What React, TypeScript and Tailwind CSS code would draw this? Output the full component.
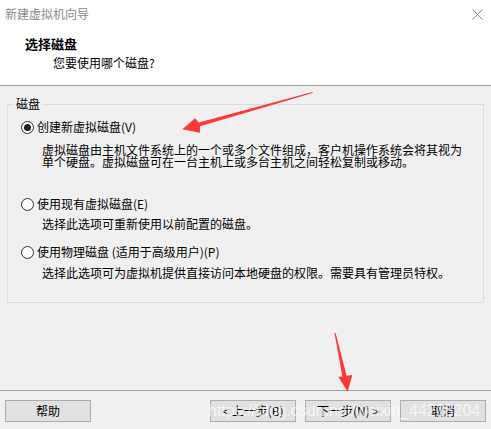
import React, { useState } from 'react';

const font = { fontFamily: '"Noto Sans CJK SC", "Microsoft YaHei", sans-serif' };

function Radio({ checked }: { checked: boolean }) {
  return (
    <span className="w-[13px] h-[13px] rounded-full border border-[#333] bg-white flex items-center justify-center shrink-0">
      {checked && <span className="w-[7px] h-[7px] rounded-full bg-[#222]" />}
    </span>
  );
}

function Option({
  label,
  desc,
  checked,
  onPick,
  rowClass,
  descClass,
}: {
  label: string;
  desc: string[];
  checked: boolean;
  onPick: () => void;
  rowClass: string;
  descClass: string;
}) {
  return (
    <div>
      <button
        type="button"
        onClick={onPick}
        className={`flex items-center gap-[3px] ml-[13px] h-[16px] bg-transparent border-none p-0 cursor-default text-[12px] text-black ${rowClass}`}
      >
        <Radio checked={checked} />
        <span className="leading-[16px]">{label}</span>
      </button>
      <div className={`ml-[34px] text-[12px] leading-[12px] text-black ${descClass}`}>
        {desc.map((d) => (
          <div key={d}>{d}</div>
        ))}
      </div>
    </div>
  );
}

function WizButton({ children }: { children: React.ReactNode }) {
  return (
    <button
      type="button"
      className="w-[86px] h-[22px] bg-[#e1e1e1] border border-[#adadad] text-[12px] text-black leading-none flex items-center justify-center"
    >
      {children}
    </button>
  );
}

export default function App() {
  const [pick, setPick] = useState<number>(0);

  return (
    <div className="w-[491px] h-[429px] relative overflow-hidden bg-[#f0f0f0] flex flex-col select-none" style={font}>
      {/* Title + header */}
      <div className="h-[86px] bg-white border-b border-[#a0a0a0] shrink-0">
        <div className="h-[28px] flex items-center justify-between pl-[5px] pr-[8px]">
          <span className="text-[12px] text-[#8a8a8a]">新建虚拟机向导</span>
          <svg width="11" height="11" viewBox="0 0 11 11">
            <path d="M0.5 0.5 L10.5 10.5 M10.5 0.5 L0.5 10.5" stroke="#8a8a8a" strokeWidth="1" />
          </svg>
        </div>
        <div className="pl-[25px] mt-[9px] text-[13px] font-bold leading-[14px] text-black">选择磁盘</div>
        <div className="pl-[53px] mt-[5px] text-[12px] leading-[14px] text-black">您要使用哪个磁盘?</div>
      </div>

      {/* Body */}
      <div className="flex-1 pt-[10px]">
        <fieldset className="mx-[7px] border border-[#dcdcdc] pb-[23px]">
          <legend className="ml-[6px] px-[2px] text-[12px] leading-[16px] text-black">磁盘</legend>
          <Option
            label="创建新虚拟磁盘(V)"
            desc={[
              '虚拟磁盘由主机文件系统上的一个或多个文件组成，客户机操作系统会将其视为',
              '单个硬盘。虚拟磁盘可在一台主机上或多台主机之间轻松复制或移动。',
            ]}
            checked={pick === 0}
            onPick={() => setPick(0)}
            rowClass="mt-[7px]"
            descClass="mt-[9px]"
          />
          <Option
            label="使用现有虚拟磁盘(E)"
            desc={['选择此选项可重新使用以前配置的磁盘。']}
            checked={pick === 1}
            onPick={() => setPick(1)}
            rowClass="mt-[28px]"
            descClass="mt-[6px]"
          />
          <Option
            label="使用物理磁盘 (适用于高级用户)(P)"
            desc={['选择此选项可为虚拟机提供直接访问本地硬盘的权限。需要具有管理员特权。']}
            checked={pick === 2}
            onPick={() => setPick(2)}
            rowClass="mt-[14px]"
            descClass="mt-[7px]"
          />
        </fieldset>
      </div>

      {/* Footer */}
      <div className="h-[39px] shrink-0 border-t border-[#a0a0a0] flex items-start pt-[9px] pl-[5px] pr-[5px]">
        <WizButton>帮助</WizButton>
        <div className="flex-1" />
        <div className="flex gap-[9px]">
          <WizButton>&lt; 上一步(B)</WizButton>
          <WizButton>下一步(N) &gt;</WizButton>
          <WizButton>取消</WizButton>
        </div>
      </div>

      {/* Watermark */}
      <div
        className="absolute left-[208px] top-[401px] text-[16px] leading-[20px] text-white/70 pointer-events-none whitespace-nowrap"
        style={{ fontFamily: '"Liberation Sans", Arial, sans-serif' }}
      >
        https://blog.csdn.net/weixin_44218204
      </div>

      {/* Red annotation arrows */}
      <svg className="absolute inset-0 pointer-events-none" width="491" height="429" viewBox="0 0 491 429">
        <polygon
          points="182.3,129.3 195,118.3 198.8,122.4 312.5,92 312.8,93 200,126.2 200,132.7"
          fill="#ff3838"
        />
        <polygon
          points="347.7,391.7 338.3,376.7 342.4,376.6 334.5,333.2 335.6,333 346.6,375.8 352.3,375"
          fill="#ff3838"
        />
      </svg>
    </div>
  );
}
